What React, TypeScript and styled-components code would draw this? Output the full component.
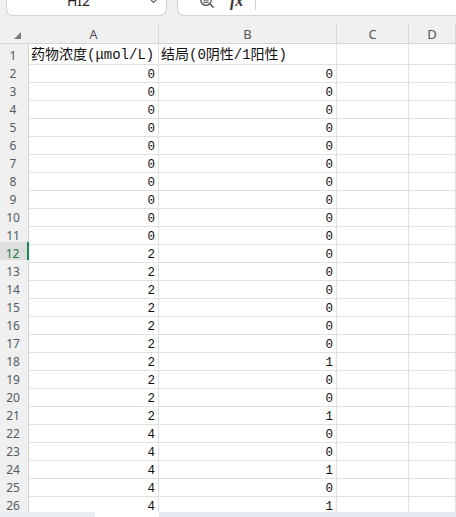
import React from "react";
import styled, { createGlobalStyle } from "styled-components";

const Global = createGlobalStyle`
  html, body { margin: 0; padding: 0; background: #fff; overflow: hidden; }
  #root { width: 456px; height: 517px; }
  * { box-sizing: border-box; }
`;

const COLS = "29px 130px 178px 72px 1fr";

const Sheet = styled.div`
  width: 456px;
  height: 517px;
  display: flex;
  flex-direction: column;
  background: #fff;
  overflow: hidden;
  font-family: "Noto Sans", "Liberation Sans", sans-serif;
`;

const TopBar = styled.div`
  flex: none;
  height: 16px;
  background: #f0f0f0;
  display: flex;
  align-items: flex-end;
  gap: 10px;
  padding-left: 6px;
  overflow: hidden;
`;

const NameBox = styled.div`
  flex: none;
  width: 161px;
  height: 30px;
  background: #fff;
  border: 1px solid #d3d3d3;
  border-top: none;
  border-radius: 0 0 7px 7px;
  display: flex;
  align-items: center;
  padding: 0 7px 0 0;
`;

const NameText = styled.span`
  flex: 1;
  text-align: center;
  font-size: 14px;
  color: #222;
  padding-left: 2px;
`;

const FormulaBox = styled.div`
  flex: 1;
  height: 30px;
  background: #fff;
  border: 1px solid #d3d3d3;
  border-top: none;
  border-right: none;
  border-radius: 0 0 0 7px;
  display: flex;
  align-items: center;
  padding-left: 21px;
`;

const FxLabel = styled.span`
  font-family: "Liberation Serif", serif;
  font-style: italic;
  font-weight: bold;
  font-size: 16px;
  color: #333;
  margin-left: 15px;
`;

const Divider = styled.span`
  width: 1px;
  height: 24px;
  margin-top: -6px;
  background: #d3d3d3;
  margin-left: 12px;
`;

const HeaderRow = styled.div`
  flex: none;
  display: grid;
  grid-template-columns: ${COLS};
  background: #f0f0f0;
  padding-top: 8px;
  border-bottom: 1px solid #d4d4d4;
`;

const HeaderCell = styled.div<{ $corner?: boolean }>`
  height: 19px;
  display: flex;
  align-items: center;
  justify-content: center;
  padding-top: 1px;
  border-right: ${(p) => (p.$corner ? "none" : "1px solid #dadada")};
  font-size: 13px;
  color: #555;
`;

const Row = styled.div`
  flex: none;
  display: grid;
  grid-template-columns: ${COLS};
  height: 18px;
`;

const RowHead = styled.div<{ $active?: boolean }>`
  text-align: center;
  padding: 3px 2px 0 0;
  line-height: 17px;
  background: ${(p) => (p.$active ? "#dedede" : "#f0f0f0")};
  color: ${(p) => (p.$active ? "#17784a" : "#555b63")};
  border-right: ${(p) => (p.$active ? "2px solid #17874f" : "1px solid #d4d4d4")};
  border-bottom: 1px solid #e2e2e2;
  font-size: 12px;
`;

const Cell = styled.div<{ $label?: boolean }>`
  border-right: 1px solid #e1e1e1;
  border-bottom: 1px solid #e1e1e1;
  font-family: "Liberation Mono", "Noto Sans CJK SC", monospace;
  font-size: ${(p) => (p.$label ? "14px" : "12.5px")};
  line-height: 18px;
  color: #111;
  white-space: nowrap;
  overflow: hidden;
  text-align: ${(p) => (p.$label ? "left" : "right")};
  padding: ${(p) => (p.$label ? "2px 0 0 2px" : "4px 3px 0 0")};
`;

const Footer = styled.div`
  flex: 1;
  display: grid;
  grid-template-columns: 95px 64px 1fr;
`;

const Track = styled.div<{ $tone: string }>`
  background: ${(p) => p.$tone};
`;

const doses = [0, 0, 0, 0, 0, 0, 0, 0, 0, 0, 2, 2, 2, 2, 2, 2, 2, 2, 2, 2, 4, 4, 4, 4, 4];
const outcomes = [0, 0, 0, 0, 0, 0, 0, 0, 0, 0, 0, 0, 0, 0, 0, 0, 1, 0, 0, 1, 0, 0, 1, 0, 1];

const Corner = () => (
  <svg width="7" height="7" viewBox="0 0 7 7" style={{ marginLeft: 6, marginTop: 2 }}>
    <polygon points="7,0 7,7 0,7" fill="#7a7a7a" />
  </svg>
);

const Chevron = () => (
  <svg width="11" height="7" viewBox="0 0 11 7">
    <polyline points="1,1 5.5,5.5 10,1" fill="none" stroke="#666" strokeWidth="1.2" />
  </svg>
);

const ZoomOut = () => (
  <svg width="16" height="16" viewBox="0 0 16 16">
    <circle cx="7" cy="7" r="5.3" fill="none" stroke="#444" strokeWidth="1.2" />
    <line x1="4.3" y1="7" x2="9.7" y2="7" stroke="#444" strokeWidth="1.2" />
    <line x1="4.3" y1="9.3" x2="9.7" y2="9.3" stroke="#444" strokeWidth="1.1" />
    <line x1="10.8" y1="10.8" x2="14.5" y2="14.5" stroke="#444" strokeWidth="1.3" />
  </svg>
);

export default function App() {
  return (
    <>
      <Global />
      <Sheet>
        <TopBar>
          <NameBox>
            <NameText>HI2</NameText>
            <Chevron />
          </NameBox>
          <FormulaBox>
            <ZoomOut />
            <FxLabel>fx</FxLabel>
            <Divider />
          </FormulaBox>
        </TopBar>
        <HeaderRow>
          <HeaderCell $corner>
            <Corner />
          </HeaderCell>
          <HeaderCell>A</HeaderCell>
          <HeaderCell>B</HeaderCell>
          <HeaderCell>C</HeaderCell>
          <HeaderCell>D</HeaderCell>
        </HeaderRow>
        <Row>
          <RowHead>1</RowHead>
          <Cell $label>药物浓度(μmol/L)</Cell>
          <Cell $label>结局(0阴性/1阳性)</Cell>
          <Cell />
          <Cell />
        </Row>
        {doses.map((d, i) => {
          const n = i + 2;
          return (
            <Row key={n}>
              <RowHead $active={n === 12}>{n}</RowHead>
              <Cell>{d}</Cell>
              <Cell>{outcomes[i]}</Cell>
              <Cell />
              <Cell />
            </Row>
          );
        })}
        <Footer>
          <Track $tone="#e9eef3" />
          <Track $tone="#ffffff" />
          <Track $tone="#e3e9ef" />
        </Footer>
      </Sheet>
    </>
  );
}
